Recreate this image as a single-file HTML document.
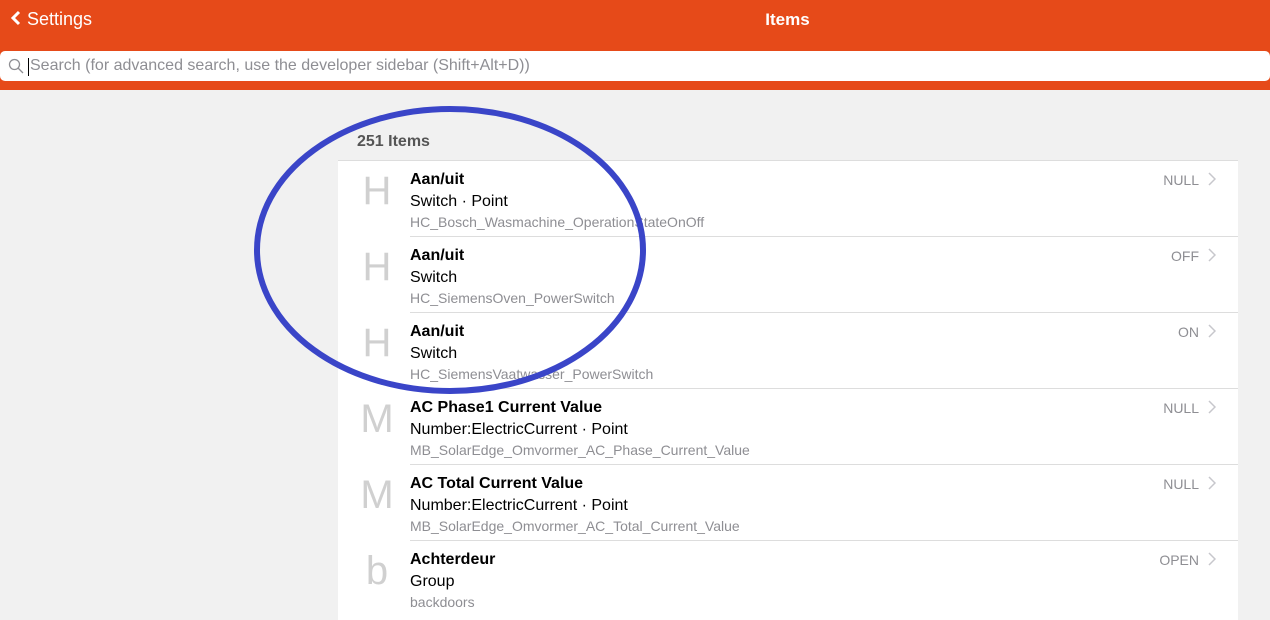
<!DOCTYPE html>
<html><head><meta charset="utf-8"><style>
*{margin:0;padding:0;box-sizing:border-box}
body{width:1270px;height:607px;overflow:hidden;background:#f1f1f1;font-family:"Liberation Sans",sans-serif;position:relative}
.nav{position:absolute;left:0;top:0;width:1270px;height:90px;background:#e64a19}
.back{position:absolute;left:10px;top:9px;color:#fff;font-size:18px}
.title{position:absolute;top:10px;color:#fff;font-size:17px;font-weight:bold;left:0;width:1575px;text-align:center}
.search{position:absolute;left:0;top:51px;width:1270px;height:30px;background:#fff;border-radius:5px}
.search span{position:absolute;left:30px;top:6px;font-size:16px;color:#8e8e93}
.caret{position:absolute;left:28px;top:7px;width:1px;height:18px;background:#000}
.cnt{position:absolute;left:357px;top:133px;font-size:16px;font-weight:bold;color:#555}
.card{position:absolute;left:338px;top:160px;width:900px;height:460px;background:#fff;border-top:1px solid #ddd}
.row{position:absolute;left:0;width:900px;height:76px}
.row .ic{position:absolute;left:22px;top:8px;font-size:40px;color:#d0d0d0;width:34px;text-align:center}
.row .t{position:absolute;left:72px;top:10px;font-size:16px;font-weight:bold;color:#000}
.row .s{position:absolute;left:72px;top:32px;font-size:16px;color:#000}
.row .n{position:absolute;left:72px;top:53px;font-size:14px;color:#8e8e93}
.row .v{position:absolute;right:39px;top:11px;font-size:14px;color:#8e8e93}
.row .ch{position:absolute;right:22px;top:11px;width:8px;height:14px}
.row .sep{position:absolute;left:72px;right:0;bottom:0;height:1px;background:#ddd}
</style></head><body>
<div class="nav">
<div class="back"><svg width="12" height="16" viewBox="0 0 12 16" style="vertical-align:-1px"><path d="M9 2L3 8l6 6" stroke="#fff" stroke-width="3" fill="none"/></svg> Settings</div>
<div class="title">Items</div>
<div class="search"><svg style="position:absolute;left:8px;top:7px" width="16" height="16" viewBox="0 0 16 16"><circle cx="6.5" cy="6.5" r="5" stroke="#8e8e93" stroke-width="1.3" fill="none"/><path d="M10 10l5 5" stroke="#8e8e93" stroke-width="1.3"/></svg><div class="caret"></div><span>Search (for advanced search, use the developer sidebar (Shift+Alt+D))</span></div>
</div>
<div class="cnt">251 Items</div>
<div class="card">
<div class="row" style="top:0"><div class="ic">H</div><div class="t">Aan/uit</div><div class="s">Switch · Point</div><div class="n">HC_Bosch_Wasmachine_OperationStateOnOff</div><div class="v">NULL</div><svg class="ch" viewBox="0 0 8 14"><path d="M1 1l6 6-6 6" stroke="#c7c7cc" stroke-width="1.5" fill="none"/></svg><div class="sep"></div></div>
<div class="row" style="top:76px"><div class="ic">H</div><div class="t">Aan/uit</div><div class="s">Switch</div><div class="n">HC_SiemensOven_PowerSwitch</div><div class="v">OFF</div><svg class="ch" viewBox="0 0 8 14"><path d="M1 1l6 6-6 6" stroke="#c7c7cc" stroke-width="1.5" fill="none"/></svg><div class="sep"></div></div>
<div class="row" style="top:152px"><div class="ic">H</div><div class="t">Aan/uit</div><div class="s">Switch</div><div class="n">HC_SiemensVaatwasser_PowerSwitch</div><div class="v">ON</div><svg class="ch" viewBox="0 0 8 14"><path d="M1 1l6 6-6 6" stroke="#c7c7cc" stroke-width="1.5" fill="none"/></svg><div class="sep"></div></div>
<div class="row" style="top:228px"><div class="ic">M</div><div class="t">AC Phase1 Current Value</div><div class="s">Number:ElectricCurrent · Point</div><div class="n">MB_SolarEdge_Omvormer_AC_Phase_Current_Value</div><div class="v">NULL</div><svg class="ch" viewBox="0 0 8 14"><path d="M1 1l6 6-6 6" stroke="#c7c7cc" stroke-width="1.5" fill="none"/></svg><div class="sep"></div></div>
<div class="row" style="top:304px"><div class="ic">M</div><div class="t">AC Total Current Value</div><div class="s">Number:ElectricCurrent · Point</div><div class="n">MB_SolarEdge_Omvormer_AC_Total_Current_Value</div><div class="v">NULL</div><svg class="ch" viewBox="0 0 8 14"><path d="M1 1l6 6-6 6" stroke="#c7c7cc" stroke-width="1.5" fill="none"/></svg><div class="sep"></div></div>
<div class="row" style="top:380px"><div class="ic">b</div><div class="t">Achterdeur</div><div class="s">Group</div><div class="n">backdoors</div><div class="v">OPEN</div><svg class="ch" viewBox="0 0 8 14"><path d="M1 1l6 6-6 6" stroke="#c7c7cc" stroke-width="1.5" fill="none"/></svg></div>
</div>
<svg style="position:absolute;left:0;top:0" width="1270" height="607"><ellipse cx="450" cy="250" rx="193" ry="141" stroke="#3a45c8" stroke-width="6" fill="none"/></svg>
</body></html>
